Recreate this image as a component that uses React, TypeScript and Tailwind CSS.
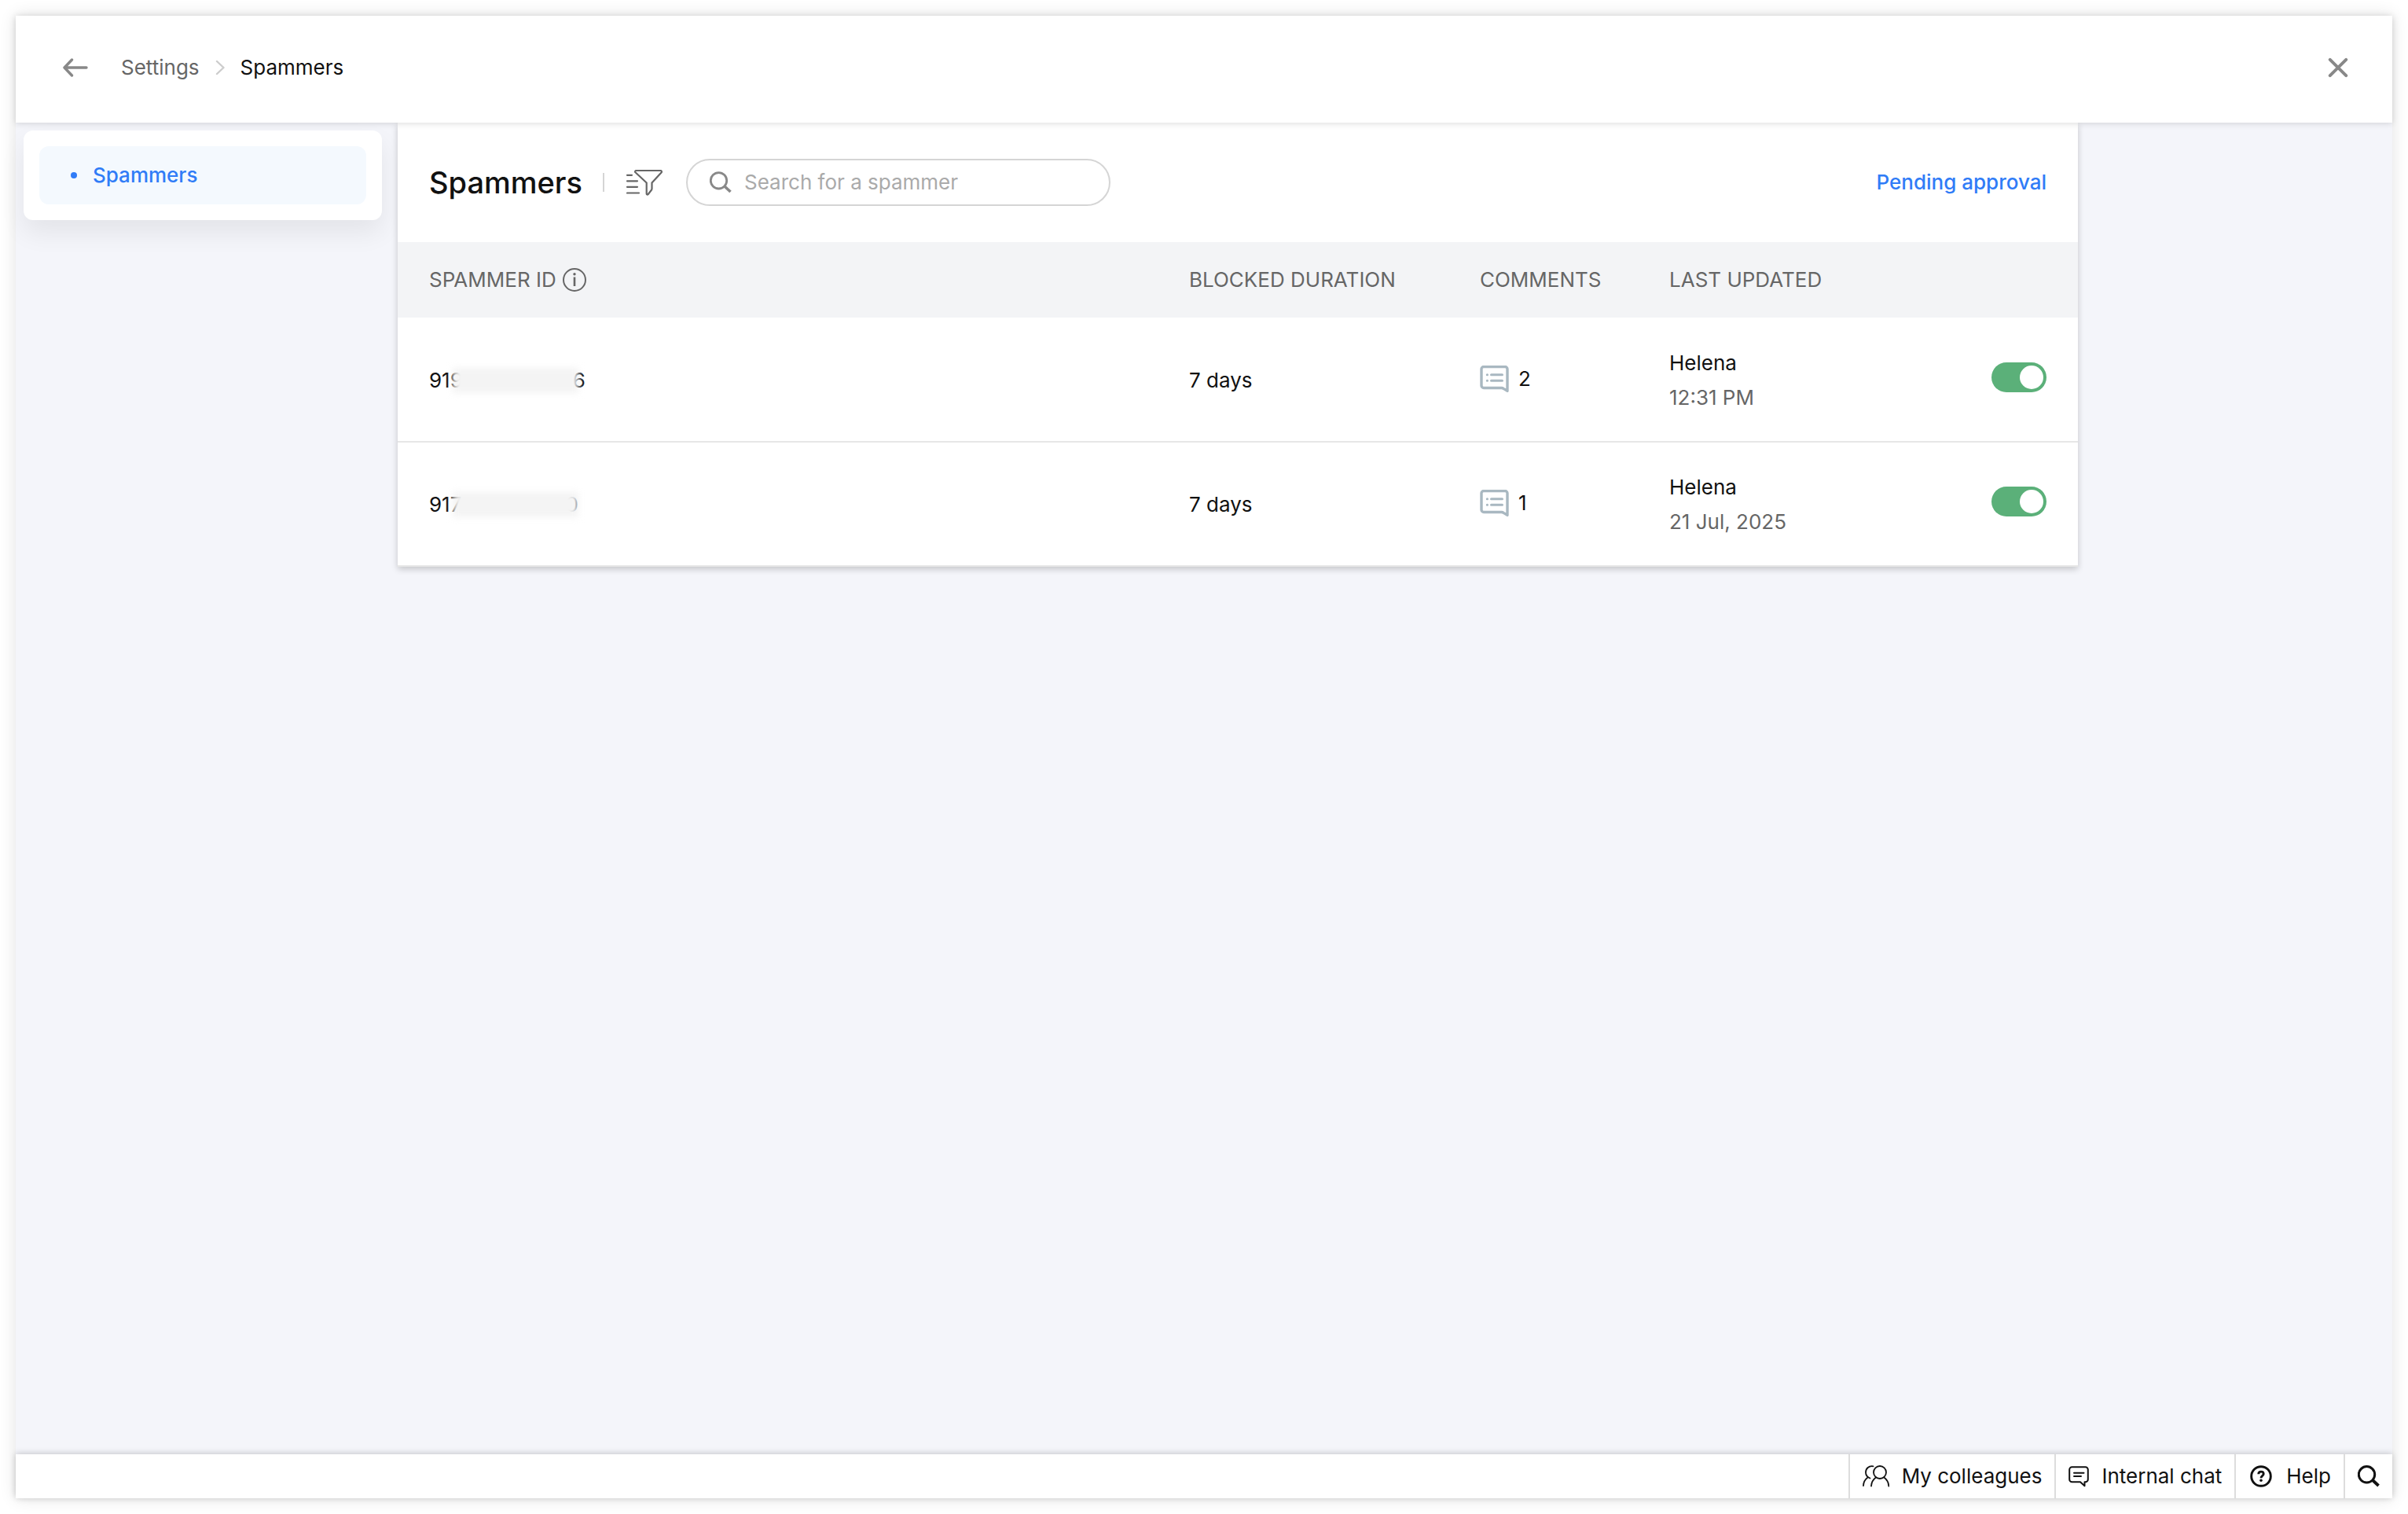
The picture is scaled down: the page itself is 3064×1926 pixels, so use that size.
import { useState } from 'react';

type Spammer = {
  id: string;
  prefix: string;
  suffix: string;
  maskWidth: string;
  duration: string;
  comments: number;
  updatedBy: string;
  updatedAt: string;
};

const spammers: Spammer[] = [
  { id: 'a', prefix: '919', suffix: '6', maskWidth: 'w-[140px]', duration: '7 days', comments: 2, updatedBy: 'Helena', updatedAt: '12:31 PM' },
  { id: 'b', prefix: '917', suffix: '0', maskWidth: 'w-[132px]', duration: '7 days', comments: 1, updatedBy: 'Helena', updatedAt: '21 Jul, 2025' },
];

function BackIcon() {
  return (
    <svg width="32" height="24" viewBox="0 0 32 24" fill="none" stroke="currentColor" strokeWidth="3.400" strokeLinecap="round" strokeLinejoin="round">
      <path d="M30 12H2.500M11.500 2L2 12l9.500 10" />
    </svg>
  );
}

function ChevronIcon() {
  return (
    <svg width="12" height="20" viewBox="0 0 12 20" fill="none" stroke="currentColor" strokeWidth="2.400" strokeLinecap="round" strokeLinejoin="round">
      <path d="M2 2l8.500 8L2 18" />
    </svg>
  );
}

function CloseIcon() {
  return (
    <svg width="26" height="26" viewBox="0 0 26 26" fill="none" stroke="currentColor" strokeWidth="4" strokeLinecap="round">
      <path d="M2.800 2.800l20.400 20.400M23.200 2.800L2.800 23.200" />
    </svg>
  );
}

function FilterIcon() {
  return (
    <svg width="46" height="34" viewBox="0 0 46 34" fill="none" stroke="currentColor" strokeWidth="2.200" strokeLinejoin="round" strokeLinecap="round">
      <path d="M12.500 2h31c1.300 0 1.900 1.400 1 2.400L32.500 17.500v7.500c0 .700-.200 1.300-.600 1.800l-4.300 5.400c-.700.800-1.900.400-1.900-.700V17.500L11.500 4.300c-.900-.900-.300-2.300 1-2.300z" />
      <path d="M1 7.800h6M1 15.300h13M1 22.800h13M1 30.500h15" />
    </svg>
  );
}

function SearchIcon({ strokeWidth }: { strokeWidth: number }) {
  return (
    <svg width="28" height="28" viewBox="0 0 28 28" fill="none" stroke="currentColor" strokeWidth={strokeWidth}>
      <circle cx="11.500" cy="11.800" r="10.200" />
      <path d="M19 19l7.500 7" strokeWidth={strokeWidth + 0.8} />
    </svg>
  );
}

function InfoIcon() {
  return (
    <svg width="30" height="30" viewBox="0 0 30 30" fill="none" stroke="currentColor" strokeWidth="2">
      <circle cx="15" cy="15" r="14" />
      <path d="M15 11.500v11.500" strokeWidth="2.600" />
      <circle cx="15" cy="7.800" r="1.700" fill="currentColor" stroke="none" />
    </svg>
  );
}

function CommentIcon() {
  return (
    <svg width="37" height="34" viewBox="0 0 37 34" fill="none" stroke="currentColor" strokeWidth="3.400" strokeLinejoin="round">
      <path d="M35 32.300V4.500a3 3 0 0 0-3-3H5a3 3 0 0 0-3 3v21a3 3 0 0 0 3 3h22.500c1.200 0 2 .4 3 1.100z" />
      <path d="M14.500 11.700h14M14.500 19.200h14M9.300 11.700h.2M9.300 19.200h.2" strokeWidth="3" strokeLinecap="round" />
    </svg>
  );
}

function ColleaguesIcon() {
  return (
    <svg width="34" height="28" viewBox="0 0 34 28" fill="none" stroke="currentColor" strokeWidth="1.800" strokeLinecap="round">
      <circle cx="22" cy="9" r="8" />
      <path d="M11 26.500c.3-4.700 2.600-8.600 6-11M33.300 26.500c-.3-4.700-2.600-8.600-6-11" />
      <path d="M13.500 1.300C8 .300 4 4.200 4 8.900c0 3.500 2.500 6.400 5.500 7.600M1 26c.200-4.400 2.200-7.900 5-10" />
    </svg>
  );
}

function ChatIcon() {
  return (
    <svg width="26" height="27" viewBox="0 0 26 27" fill="none" stroke="currentColor" strokeWidth="2" strokeLinejoin="round">
      <path d="M4.500 1.200h17a3.300 3.300 0 0 1 3.300 3.300v12.500a3.300 3.300 0 0 1-3.300 3.300h-1v5L15 20.300H4.500A3.300 3.300 0 0 1 1.200 17V4.500a3.300 3.300 0 0 1 3.300-3.300z" />
      <path d="M7 8.700h12.500M7 13h9" strokeLinecap="round" />
    </svg>
  );
}

function HelpIcon() {
  return (
    <svg width="28" height="28" viewBox="0 0 28 28" fill="none" stroke="currentColor" strokeWidth="2.900">
      <circle cx="14" cy="14" r="12.300" />
      <path d="M10.800 11.200c0-1.900 1.400-3.100 3.200-3.100 1.900 0 3.200 1.200 3.200 2.900 0 2.400-3.200 2.400-3.200 5.200" />
      <circle cx="14" cy="19.200" r="1.800" fill="currentColor" stroke="none" />
    </svg>
  );
}

function SpammerRow({ spammer }: { spammer: Spammer }) {
  const [blocked, setBlocked] = useState(true);

  return (
    <tr className="h-[158px] border-b-2 border-[#e7e7e7] text-[26px] leading-[44px] text-[#111]">
      <td className="pt-[2px] pl-10">
        <span className="relative inline-flex">
          {spammer.prefix}
          <span className={spammer.maskWidth} />
          {spammer.suffix}
          <span className="absolute top-[6px] left-[30px] h-8 w-[160px] bg-[#f4f4f4] blur-[4px]" />
        </span>
      </td>
      <td className="pt-[2px]">{spammer.duration}</td>
      <td className="pb-[2px]">
        <button type="button" className="flex items-center gap-3">
          <span className="text-[#a9b8c1]">
            <CommentIcon />
          </span>
          {spammer.comments}
        </button>
      </td>
      <td className="pt-[2px]">
        <p>{spammer.updatedBy}</p>
        <p className="text-[#666]">{spammer.updatedAt}</p>
      </td>
      <td className="pr-10 pb-[6px]">
        <input
          type="checkbox"
          aria-label="Blocked"
          checked={blocked}
          onChange={() => setBlocked(!blocked)}
          className="ml-auto flex h-[38px] w-[70px] appearance-none items-center rounded-full bg-gray-300 px-1 before:size-[30px] before:rounded-full before:bg-white checked:justify-end checked:bg-[#5bb079]"
        />
      </td>
    </tr>
  );
}

export default function App() {
  return (
    <div className="flex min-h-screen bg-white p-5 font-['Inter',sans-serif] text-[26px] leading-8 text-[#111]">
      <div className="flex flex-1 flex-col bg-[#f4f5fa] shadow-[0_0_20px_rgba(0,0,0,0.12)]">
        <header className="relative flex h-[136px] items-center bg-white px-[60px] pb-1 shadow-[0_1px_8px_rgba(0,0,0,0.15)]">
          <button type="button" aria-label="Back" className="text-[#888]">
            <BackIcon />
          </button>
          <nav className="ml-[42px] flex items-center gap-5">
            <a href="#settings" className="text-[#666]">Settings</a>
            <span className="text-[#ccc]">
              <ChevronIcon />
            </span>
            <span>Spammers</span>
          </nav>
          <button type="button" aria-label="Close" className="-mr-1 ml-auto text-[#888]">
            <CloseIcon />
          </button>
        </header>

        <div className="flex flex-1 items-start">
          <aside className="w-[486px] shrink-0 py-[10px] pr-5 pl-[10px]">
            <div className="rounded-xl bg-white p-5 shadow-[0_16px_32px_rgba(0,0,0,0.07)]">
              <a href="#spammers" className="flex h-[74px] items-center gap-5 rounded-xl bg-[#f4f9fe] px-10 font-medium text-[#307cf7]">
                <span className="size-2 rounded-full bg-[#307cf7]" />
                Spammers
              </a>
            </div>
          </aside>

          <main className="mr-[400px] flex-1 bg-white shadow-[0_3px_8px_rgba(0,0,0,0.2)]">
            <div className="flex h-[152px] items-center px-10">
              <h1 className="text-[38px] leading-[48px] font-medium">Spammers</h1>
              <span className="ml-[26px] h-6 w-[2px] bg-[#d5d5d5]" />
              <button type="button" aria-label="Filter" className="ml-7 text-[#666]">
                <FilterIcon />
              </button>
              <label className="ml-[30px] flex h-[60px] w-[540px] items-center gap-4 rounded-full border-2 border-[#d5d5d5] px-7 text-[#888]">
                <SearchIcon strokeWidth={2.8} />
                <input
                  type="text"
                  aria-label="Search for a spammer"
                  placeholder="Search for a spammer"
                  className="min-w-0 flex-1 text-[#111] outline-none placeholder:text-[#aaa]"
                />
              </label>
              <a href="#pending" className="ml-auto font-medium text-[#307cf7]">Pending approval</a>
            </div>

            <table className="w-full table-fixed text-left">
              <colgroup>
                <col />
                <col className="w-[370px]" />
                <col className="w-[241px]" />
                <col className="w-[370px]" />
                <col className="w-[150px]" />
              </colgroup>
              <thead>
                <tr className="h-24 bg-[#f3f4f6] text-[#666] uppercase">
                  <th className="pl-10 font-normal">
                    <span className="flex items-center gap-2">
                      Spammer ID
                      <InfoIcon />
                    </span>
                  </th>
                  <th className="font-normal">Blocked duration</th>
                  <th className="font-normal">Comments</th>
                  <th className="font-normal">Last updated</th>
                  <td />
                </tr>
              </thead>
              <tbody>
                {spammers.map((spammer) => (
                  <SpammerRow key={spammer.id} spammer={spammer} />
                ))}
              </tbody>
            </table>
          </main>
        </div>

        <footer className="relative flex h-14 justify-end bg-white shadow-[0_-1px_8px_rgba(0,0,0,0.2)]">
          <button type="button" className="flex items-center gap-4 border-l-2 border-[#ddd] px-4">
            <ColleaguesIcon />
            My colleagues
          </button>
          <button type="button" className="flex items-center gap-4 border-l-2 border-[#ddd] px-4">
            <ChatIcon />
            Internal chat
          </button>
          <button type="button" className="flex items-center gap-[18px] border-l-2 border-[#ddd] pr-4 pl-[18px]">
            <HelpIcon />
            Help
          </button>
          <button type="button" aria-label="Search" className="flex items-center border-l-2 border-[#ddd] px-4">
            <SearchIcon strokeWidth={3} />
          </button>
        </footer>
      </div>
    </div>
  );
}
